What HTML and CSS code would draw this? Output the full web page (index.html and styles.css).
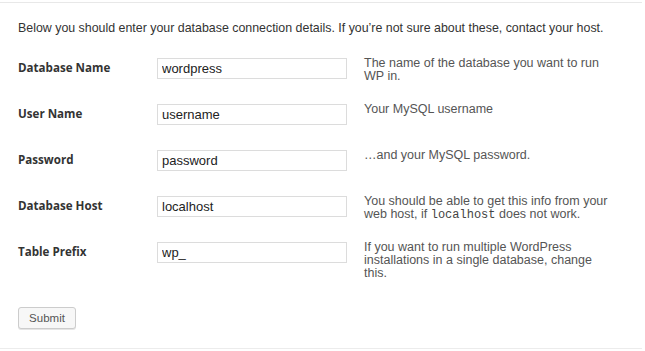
FILE: index.html
```html
<!DOCTYPE html>
<html lang="en">
  <head>
    <meta charset="UTF-8" />
    <meta name="viewport" content="width=device-width, initial-scale=1.0" />
    <title>Database Setup</title>

    <link rel="stylesheet" href="styles.css">
  </head>

  <body>
    <div class="setup">
      <form method="post" action="#">
        <p class="intro">
          Below you should enter your database connection details. If you’re not sure about these, contact your host.
        </p>

        <div class="fields">
          <div class="field">
            <label for="dbname">Database Name</label>
            <input type="text" id="dbname" name="dbname" value="wordpress" />
            <div class="help">The name of the database you want to run WP in.</div>
          </div>

          <div class="field">
            <label for="uname">User Name</label>
            <input type="text" id="uname" name="uname" value="username" />
            <div class="help">Your MySQL username</div>
          </div>

          <div class="field">
            <label for="pwd">Password</label>
            <input type="text" id="pwd" name="pwd" value="password" />
            <div class="help">…and your MySQL password.</div>
          </div>

          <div class="field">
            <label for="dbhost">Database Host</label>
            <input type="text" id="dbhost" name="dbhost" value="localhost" />
            <div class="help">You should be able to get this info from your web host, if <code>localhost</code> does not work.</div>
          </div>

          <div class="field">
            <label for="prefix">Table Prefix</label>
            <input type="text" id="prefix" name="prefix" value="wp_" />
            <div class="help">If you want to run multiple WordPress installations in a single database, change this.</div>
          </div>
        </div>

        <div class="step">
          <button type="submit">Submit</button>
        </div>
      </form>
    </div>
  </body>
</html>
```

FILE: styles.css
```css
body {
  margin: 0;
  padding: 0;
  background-color: #fff;
  font-family: "Liberation Sans", Arial, sans-serif;
  color: #333;
}

.setup {
  width: 642px;
  margin-top: 2px;
  border-top: 1px solid #e8e8e8;
  border-bottom: 1px solid #ececec;
  padding: 0 18px 19px 18px;
  box-sizing: border-box;
}

.intro {
  margin: 16px 0 0 0;
  font-size: 12.4px;
  line-height: 18px;
}

.fields {
  margin-top: 21px;
}

.field {
  display: grid;
  grid-template-columns: 139px 207px 1fr;
  align-items: start;
  height: 46px;
}

.field label {
  padding-top: 3px;
  font-family: "Open Sans", "Liberation Sans", sans-serif;
  font-weight: bold;
  font-size: 11.6px;
  line-height: 14px;
  color: #333;
}

.field input {
  width: 190px;
  height: 21px;
  box-sizing: border-box;
  margin: 0;
  padding: 0 4px;
  border: 1px solid #dcdcdc;
  background-color: #fff;
  font-family: "Liberation Sans", Arial, sans-serif;
  font-size: 13px;
  color: #222;
  outline: none;
}

.help {
  margin-top: -1px;
  font-size: 12.5px;
  line-height: 13px;
  color: #555;
  padding-right: 14px;
}

.help code {
  font-family: "Liberation Mono", "Courier New", monospace;
  font-size: 12px;
  line-height: 1;
  color: #444;
}

.step {
  margin-top: 19px;
}

button {
  width: 58px;
  height: 22px;
  padding: 0;
  background-color: #f7f7f7;
  border: 1px solid #cccccc;
  border-radius: 3px;
  box-shadow: 0 1px 0 #e5e5e5;
  font-family: "Liberation Sans", Arial, sans-serif;
  font-size: 11.5px;
  color: #555;
  cursor: pointer;
}

button:hover {
  background-color: #fafafa;
  border-color: #999;
}
```
